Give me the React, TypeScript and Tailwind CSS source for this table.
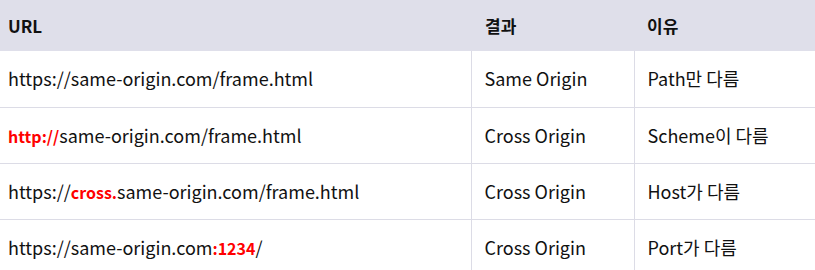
const font = { fontFamily: '"Noto Sans CJK KR", "Noto Sans", sans-serif' };

const rows = [
  {
    url: <>https://same-origin.com/frame.html</>,
    result: "Same Origin",
    reason: "Path만 다름",
  },
  {
    url: (
      <>
        <b className="font-bold text-[16px] text-[#ff0000]">http://</b>same-origin.com/frame.html
      </>
    ),
    result: "Cross Origin",
    reason: "Scheme이 다름",
  },
  {
    url: (
      <>
        https://<b className="font-bold text-[16px] text-[#ff0000]">cross.</b>same-origin.com/frame.html
      </>
    ),
    result: "Cross Origin",
    reason: "Host가 다름",
  },
  {
    url: (
      <>
        https://same-origin.com<b className="font-bold text-[16px] text-[#ff0000]">:1234</b>/
      </>
    ),
    result: "Cross Origin",
    reason: "Port가 다름",
  },
];

export default function App() {
  return (
    <div className="w-[815px] h-[270px] overflow-hidden bg-white" style={font}>
      <table className="w-full border-collapse text-[#111]">
        <thead>
          <tr className="bg-[#dfdfea] h-[51px] text-[17px]">
            <th className="text-left font-bold pl-[8px] w-[471px]">URL</th>
            <th className="text-left font-bold pl-[14px] w-[163px]">결과</th>
            <th className="text-left font-bold pl-[13px]">이유</th>
          </tr>
        </thead>
        <tbody className="text-[18px]">
          {rows.map((r, i) => (
            <tr key={i} className="h-[56px] border-b border-[#dcdce6]">
              <td className="pl-[8px]">{r.url}</td>
              <td className="pl-[13px] border-l border-[#dcdce6]">{r.result}</td>
              <td className="pl-[13px] border-l border-[#dcdce6]">{r.reason}</td>
            </tr>
          ))}
        </tbody>
      </table>
    </div>
  );
}
